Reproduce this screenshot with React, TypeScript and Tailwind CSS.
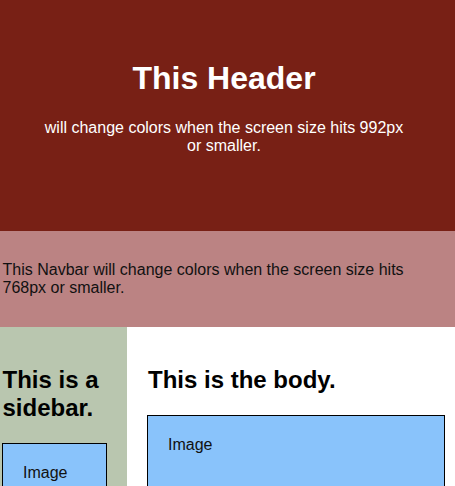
export default function App() {
  return (
    <div className="min-h-[486px] bg-white text-black" style={{ fontFamily: '"Liberation Sans", Arial, sans-serif' }}>
      <header className="h-[231px] bg-[#782015] pt-[60px] pr-[7px] text-center text-white">
        <h1 className="m-0 text-[32px] font-bold leading-[37px]">This Header</h1>
        <p className="mx-auto mt-[21.5px] w-[368px] text-[16px] leading-[18px]">
          will change colors when the screen size hits 992px or smaller.
        </p>
      </header>
      <nav className="bg-[#bb8383] py-[30px] pl-[2.5px] pr-[2px] text-[16px] leading-[18px] text-[#111]">
        <p className="w-[430px]">This Navbar will change colors when the screen size hits 768px or smaller.</p>
      </nav>
      <div className="flex">
        <aside className="w-[127px] shrink-0 bg-[#b9c6af] pt-[39px] pl-[2px] pr-[20px] pb-[20px]">
          <h2 className="m-0 pl-[0.5px] text-[24px] font-bold leading-[28px]">This is a sidebar.</h2>
          <div className="mt-[21px] h-[120px] w-[105px] border border-black bg-[#89c3fb] pl-[20px] pt-[20px] text-[16px] leading-[18px] text-[#111]">
            Image
          </div>
        </aside>
        <main className="flex-1 pt-[39px] pl-[20px] pr-[10px]">
          <h2 className="m-0 pl-[1px] text-[24px] font-bold leading-[28px]">This is the body.</h2>
          <div className="mt-[21px] h-[200px] border border-black bg-[#89c3fb] pl-[20px] pt-[20px] text-[16px] leading-[18px] text-[#111]">
            Image
          </div>
        </main>
      </div>
    </div>
  );
}
